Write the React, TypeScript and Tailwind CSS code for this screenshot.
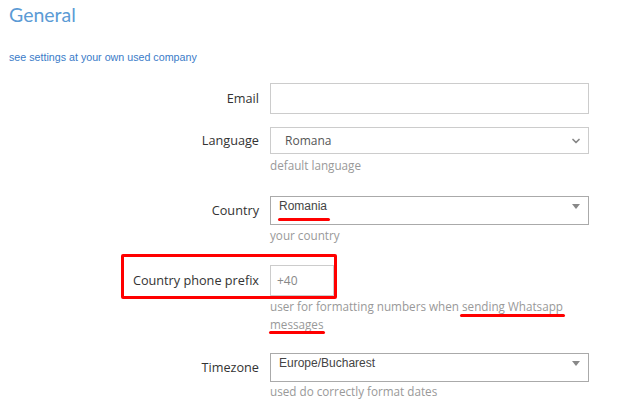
import React from "react";

const Mark = ({ className }: { className: string }) => (
  <span className={`absolute h-[3px] rounded-full bg-[#f00] ${className}`} />
);

function Row({ label, h, children }: any) {
  return (
    <div className="flex items-start">
      <div
        className={`w-[259px] shrink-0 flex items-center justify-end text-[12.7px] text-[#333] ${h}`}
      >
        {label}
      </div>
      <div className="ml-[11px] w-[319px]">{children}</div>
    </div>
  );
}

const Help = ({ children, className = "" }: any) => (
  <div className={`text-[11.7px] leading-[18px] text-[#999] ${className}`}>
    {children}
  </div>
);

const Caret = () => (
  <span className="absolute right-[8px] top-[7px] h-0 w-0 border-x-[4px] border-t-[5px] border-x-transparent border-t-[#888]" />
);

export default function App() {
  return (
    <div className="relative h-[408px] w-[624px] overflow-hidden bg-white font-['Open_Sans',sans-serif]">
      <h1 className="pl-[9px] pt-[2px] font-['Lato',sans-serif] text-[19.5px] leading-[26px] text-[#5b9bd5]">
        General
      </h1>
      <p className="mt-[22px] pl-[9px] font-['Liberation_Sans'] text-[10.7px] leading-[14px] text-[#3a7bc8]">
        see settings at your own used company
      </p>

      <div className="mt-[19px]">
        <Row label="Email" h="h-[31px]">
          <div className="h-[31px] border border-[#ccc] bg-white" />
        </Row>

        <div className="mt-[13px]">
          <Row label="Language" h="h-[27px]">
            <div className="flex h-[27px] items-center justify-between border border-[#ccc] bg-white pl-[14px] pr-[6px] text-[12px] text-[#555]">
              <span>Romana</span>
              <svg width="12" height="12" viewBox="0 0 24 24" fill="none" stroke="#888" strokeWidth="3.5" strokeLinecap="round" strokeLinejoin="round">
                <path d="m6 9 6 6 6-6" />
              </svg>
            </div>
            <Help className="mt-[2px]">default language</Help>
          </Row>
        </div>

        <div className="mt-[22px]">
          <Row label="Country" h="h-[29px]">
            <div className="relative h-[29px] border border-[#aaa] bg-white pl-[8px] font-['Liberation_Sans'] text-[12px] leading-[18px] text-[#444]">
              <span className="relative">
                Romania
                <Mark className="-left-[1px] -right-[3px] top-[19px]" />
              </span>
              <Caret />
            </div>
            <Help className="mt-[1px]">your country</Help>
          </Row>
        </div>

        <div className="mt-[21px]">
          <Row label="Country phone prefix" h="h-[31px]">
            <div className="flex h-[31px] w-[64px] items-center border border-[#ccc] bg-white pl-[6px] text-[12px] text-[#888]">
              +40
            </div>
            <Help className="mt-[1px]">
              user for formatting numbers when{" "}
              <span className="relative whitespace-nowrap">
                sending Whatsapp
                <Mark className="-left-[2px] -right-[2px] top-[16px]" />
              </span>{" "}
              <span className="relative">
                messages
                <Mark className="-left-[1px] -right-[1px] top-[15px]" />
              </span>
            </Help>
          </Row>
        </div>

        <div className="mt-[20px]">
          <Row label="Timezone" h="h-[29px]">
            <div className="relative h-[29px] border border-[#aaa] bg-white pl-[8px] font-['Liberation_Sans'] text-[12px] leading-[18px] text-[#444]">
              Europe/Bucharest
              <Caret />
            </div>
            <Help>used do correctly format dates</Help>
          </Row>
        </div>
      </div>

      <div className="absolute left-[121px] top-[254px] h-[45px] w-[216px] rounded-[2px] border-[3px] border-[#f00]" />
    </div>
  );
}
